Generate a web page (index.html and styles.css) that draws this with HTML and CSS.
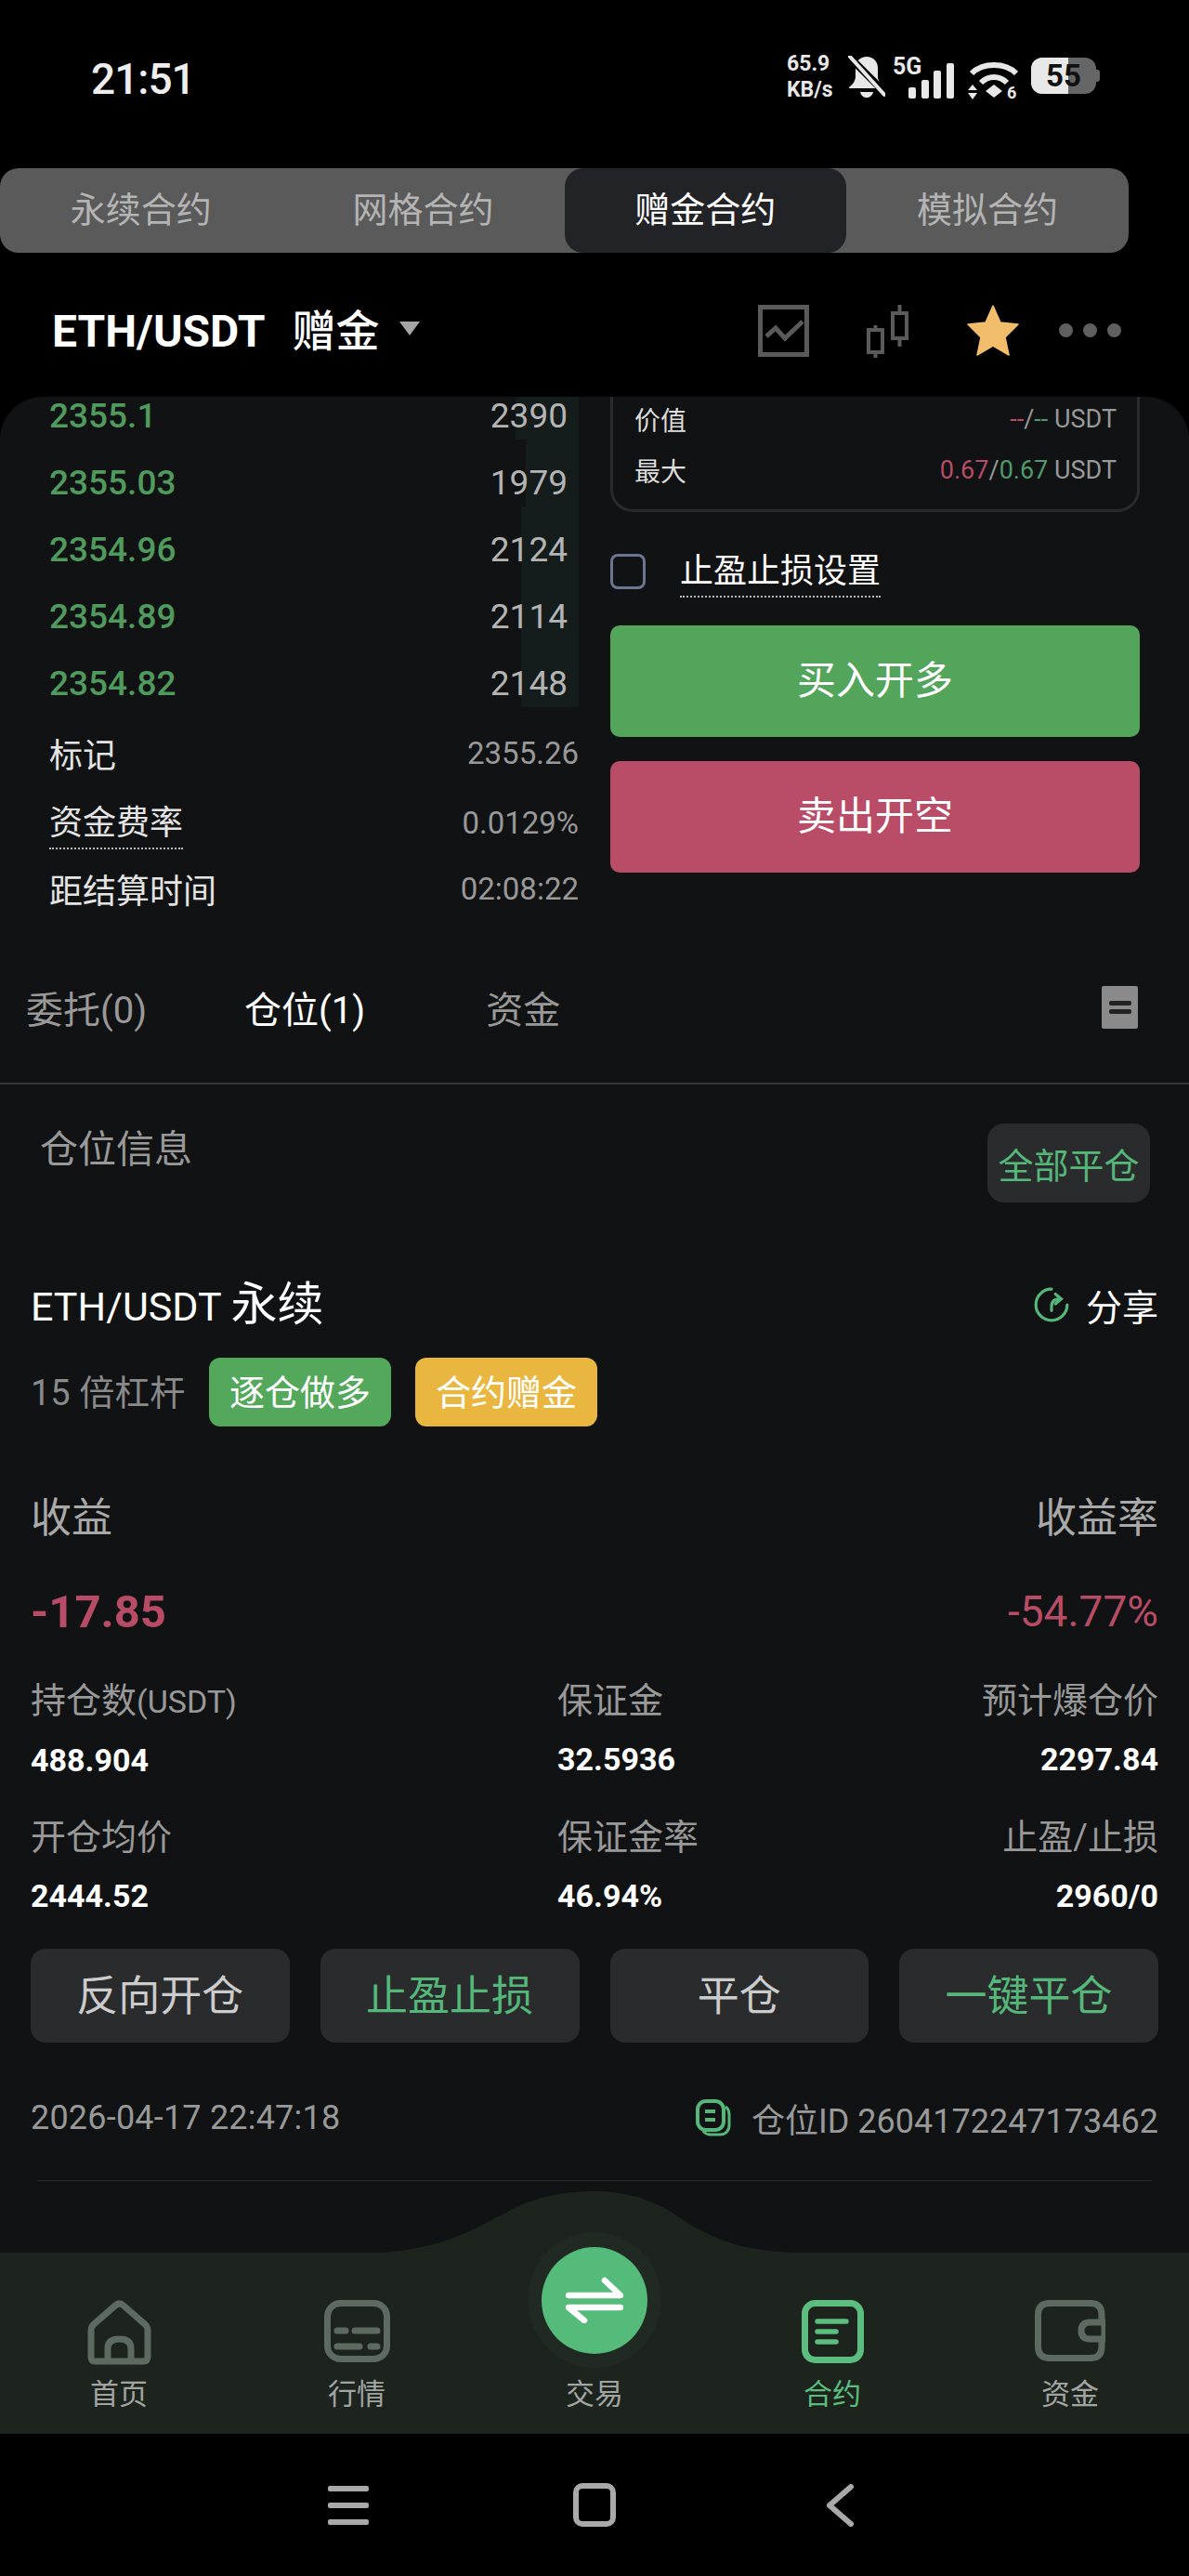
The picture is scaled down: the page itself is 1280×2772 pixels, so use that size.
FILE: index.html
```html
<!DOCTYPE html>
<html lang="zh-CN">
<head>
    <meta charset="UTF-8">
    <meta name="viewport" content="width=device-width, initial-scale=1.0">
    <title>赠金合约</title>
    <link rel="stylesheet" href="styles.css">
</head>
<body>
<div class="page">

    <div class="status">
        <div class="clock">21:51</div>
        <div class="status-icons">
            <div class="speed"><span>65.9</span><span>KB/s</span></div>
            <svg class="bell" width="40" height="45" viewBox="0 0 40 45">
                <path d="M20 1c7 0 12 5 12 12v9c0 5 3 9 7 12v1H1v-1c4-3 7-7 7-12V13C8 6 13 1 20 1z" fill="#e8e8e8"/>
                <path d="M13 39h14c-1 4-4 6-7 6s-6-2-7-6z" fill="#e8e8e8"/>
                <path d="M0 0L40 40" stroke="#000" stroke-width="8"/>
                <path d="M2 1L39 42" stroke="#e8e8e8" stroke-width="4" stroke-linecap="round"/>
            </svg>
            <div class="net">
                <span class="five-g">5G</span>
                <div class="bars">
                    <i class="b1"></i><i class="b2"></i><i class="b3"></i><i class="b4"></i>
                </div>
            </div>
            <svg class="wifi" width="56" height="46" viewBox="0 0 56 46">
                <path d="M4 14C16 2 40 2 52 14" fill="none" stroke="#e8e8e8" stroke-width="6"/>
                <path d="M14 24C22 16 34 16 42 24" fill="none" stroke="#e8e8e8" stroke-width="6"/>
                <path d="M28 26l9 7-9 7-9-7z" fill="#e8e8e8"/>
                <path d="M5 26l5 6H0zM5 42l5-7H0z" fill="#e8e8e8"/>
                <text x="42" y="41" class="wifi-six">6</text>
            </svg>
            <div class="battery">
                <div class="battery-fill"></div>
                <span>55</span>
                <i class="battery-cap"></i>
            </div>
        </div>
    </div>

    <div class="mode-tabs">
        <div class="mode-tab">永续合约</div>
        <div class="mode-tab">网格合约</div>
        <div class="mode-tab active">赠金合约</div>
        <div class="mode-tab">模拟合约</div>
    </div>

    <div class="pair-head">
        <div class="pair-name">ETH/USDT</div>
        <div class="pair-kind">赠金</div>
        <div class="caret"></div>
        <div class="pair-tools">
            <svg class="tool-chart" width="55" height="56" viewBox="0 0 55 56">
                <rect x="2.5" y="2.5" width="50" height="51" fill="none" stroke="#5a5a5a" stroke-width="5"/>
                <path d="M9 34l10-9 10 11 19-18" fill="none" stroke="#5a5a5a" stroke-width="5"/>
            </svg>
            <svg class="tool-candle" width="46" height="57" viewBox="0 0 46 57">
                <rect x="2" y="27" width="15" height="24" fill="none" stroke="#5a5a5a" stroke-width="4"/>
                <path d="M9.5 22v5M9.5 51v6" stroke="#5a5a5a" stroke-width="4"/>
                <rect x="28" y="9" width="15" height="27" fill="none" stroke="#5a5a5a" stroke-width="4"/>
                <path d="M35.500 0v9M35.500 36v9" stroke="#5a5a5a" stroke-width="4"/>
            </svg>
            <svg class="tool-star" width="56" height="56" viewBox="0 0 56 56">
                <path d="M28 1l8 18 19 2-14 14 4 19-17-10-17 10 4-19L1 21l19-2z" fill="#f2bd6b" stroke="#f2bd6b" stroke-width="1.500" stroke-linejoin="round"/>
            </svg>
            <div class="tool-dots"><i></i><i></i><i></i></div>
        </div>
    </div>

    <div class="panel">
        <div class="trade">
            <div class="trade-left">
                <div class="book">
                    <div class="book-row"><i class="depth d1"></i><span class="price">2355.1</span><span class="size">2390</span></div>
                    <div class="book-row"><i class="depth d2"></i><span class="price">2355.03</span><span class="size">1979</span></div>
                    <div class="book-row"><i class="depth d3"></i><span class="price">2354.96</span><span class="size">2124</span></div>
                    <div class="book-row"><i class="depth d3"></i><span class="price">2354.89</span><span class="size">2114</span></div>
                    <div class="book-row"><i class="depth d3"></i><span class="price">2354.82</span><span class="size">2148</span></div>
                </div>
                <div class="stat"><span>标记</span><span class="stat-val">2355.26</span></div>
                <div class="stat stat-funding"><span class="dotted">资金费率</span><span class="stat-val">0.0129%</span></div>
                <div class="stat stat-settle"><span>距结算时间</span><span class="stat-val">02:08:22</span></div>
            </div>
            <div class="trade-right">
                <div class="order-box">
                    <div class="order-row"><span>价值</span><span class="order-val"><em class="red">--</em>/<em class="green">--</em> USDT</span></div>
                    <div class="order-row"><span>最大</span><span class="order-val"><em class="red">0.67</em>/<em class="green">0.67</em> USDT</span></div>
                </div>
                <div class="tp-row">
                    <div class="checkbox"></div>
                    <span class="dotted">止盈止损设置</span>
                </div>
                <div class="big-btn buy">买入开多</div>
                <div class="big-btn sell">卖出开空</div>
            </div>
        </div>

        <div class="sub-tabs">
            <span class="sub-tab">委托(0)</span>
            <span class="sub-tab on">仓位(1)</span>
            <span class="sub-tab">资金</span>
            <div class="doc-btn"><i></i><i></i></div>
        </div>

        <div class="pos">
            <div class="pos-head">
                <span class="pos-title">仓位信息</span>
                <div class="close-all">全部平仓</div>
            </div>

            <div class="pos-name">
                <span class="pos-pair">ETH/USDT <span class="pos-kind">永续</span></span>
                <span class="share">
                    <svg width="40" height="40" viewBox="0 0 38 38">
                        <path d="M19 3A16 16 0 1 0 35 19" fill="none" stroke="#55b87a" stroke-width="3" stroke-linecap="round"/>
                        <path d="M19 25v-4c0-5 3-8 9-8" fill="none" stroke="#55b87a" stroke-width="3" stroke-linecap="round"/>
                        <path d="M23 8l6 5-6 5" fill="none" stroke="#55b87a" stroke-width="3" stroke-linecap="round"/>
                    </svg>
                    分享
                </span>
            </div>

            <div class="pos-meta">
                <span class="leverage">15 倍杠杆</span>
                <span class="badge badge-green">逐仓做多</span>
                <span class="badge badge-yellow">合约赠金</span>
            </div>

            <div class="pnl-labels"><span>收益</span><span>收益率</span></div>
            <div class="pnl-values"><span class="pnl-num">-17.85</span><span class="pnl-rate">-54.77%</span></div>

            <div class="figures">
                <div class="fig"><div class="fig-label">持仓数<small>(USDT)</small></div><div class="fig-val">488.904</div></div>
                <div class="fig"><div class="fig-label">保证金</div><div class="fig-val">32.5936</div></div>
                <div class="fig fig-end"><div class="fig-label">预计爆仓价</div><div class="fig-val">2297.84</div></div>
                <div class="fig"><div class="fig-label">开仓均价</div><div class="fig-val">2444.52</div></div>
                <div class="fig"><div class="fig-label">保证金率</div><div class="fig-val">46.94%</div></div>
                <div class="fig fig-end"><div class="fig-label">止盈/止损</div><div class="fig-val">2960/0</div></div>
            </div>

            <div class="actions">
                <div class="action">反向开仓</div>
                <div class="action action-green">止盈止损</div>
                <div class="action">平仓</div>
                <div class="action action-green">一键平仓</div>
            </div>

            <div class="pos-foot">
                <span>2026-04-17 22:47:18</span>
                <span class="pos-id">
                    <svg width="38" height="40" viewBox="0 0 38 40">
                        <rect x="2" y="2" width="28" height="31" rx="9" fill="none" stroke="#55b87a" stroke-width="4"/>
                        <path d="M32 8c3 2 4 5 4 9v11c0 6-4 10-10 10H16c-4 0-6-1-8-4" fill="none" stroke="#55b87a" stroke-width="3"/>
                        <path d="M10 13h11M10 22h11" stroke="#55b87a" stroke-width="4"/>
                    </svg>
                    <span>仓位ID 2604172247173462</span>
                </span>
            </div>
            <div class="pos-rule"></div>
        </div>
    </div>

    <div class="nav">
        <svg class="nav-hump" width="1280" height="67" viewBox="0 0 1280 67">
            <path d="M385 67C480 67 520 34 560 15C590 3 615 0 640 0C665 0 695 5 722 22C770 55 800 67 890 67Z" fill="#1d241e"/>
        </svg>
        <div class="nav-item">
            <svg width="69" height="70" viewBox="0 0 69 70">
                <path d="M4 61V33Q4 29 7 26L30 6Q34.500 2 39 6L62 26Q65 29 65 33V61Q65 66 60 66H9Q4 66 4 61Z" fill="none" stroke="#5c6a5f" stroke-width="7"/>
                <path d="M22 66V52Q22 42 34.500 42Q47 42 47 52V66" fill="none" stroke="#5c6a5f" stroke-width="7"/>
            </svg>
            <span>首页</span>
        </div>
        <div class="nav-item">
            <svg width="71" height="70" viewBox="0 0 71 70">
                <rect x="3.500" y="3.500" width="64" height="60" rx="14" fill="none" stroke="#5c6a5f" stroke-width="7"/>
                <path d="M14 33h9M33 33h24M14 50h24M50 50h7" stroke="#5c6a5f" stroke-width="7" stroke-linecap="round"/>
            </svg>
            <span>行情</span>
        </div>
        <div class="nav-item nav-trade">
            <div class="trade-slot">
                <div class="trade-halo">
                    <div class="trade-circle">
                        <svg width="62" height="50" viewBox="0 0 62 50">
                            <path d="M3 20H59L42 4" fill="none" stroke="#fff" stroke-width="6.500" stroke-linecap="round" stroke-linejoin="round"/>
                            <path d="M59 33H3L20 47" fill="none" stroke="#fff" stroke-width="6.500" stroke-linecap="round" stroke-linejoin="round"/>
                        </svg>
                    </div>
                </div>
            </div>
            <span>交易</span>
        </div>
        <div class="nav-item nav-on">
            <svg width="67" height="70" viewBox="0 0 67 70">
                <rect x="3.500" y="3.500" width="60" height="61" rx="11" fill="none" stroke="#5bbd7e" stroke-width="7"/>
                <path d="M17 23H48M17 34H37M17 45H37" stroke="#5bbd7e" stroke-width="5.500" stroke-linecap="round"/>
            </svg>
            <span>合约</span>
        </div>
        <div class="nav-item">
            <svg width="76" height="70" viewBox="0 0 76 70">
                <path d="M72 24V16Q72 3.500 60 3.500H16Q3.500 3.500 3.500 16V50Q3.500 62.500 16 62.500H60Q72 62.500 72 50V42" fill="none" stroke="#5c6a5f" stroke-width="7"/>
                <path d="M75 24H60Q50 24 50 33Q50 42 60 42H75Z" fill="none" stroke="#5c6a5f" stroke-width="7"/>
            </svg>
            <span>资金</span>
        </div>
    </div>

    <div class="sys-bar">
        <div class="sys-menu"><i></i><i></i><i></i></div>
        <div class="sys-home"></div>
        <svg width="32" height="46" viewBox="0 0 32 46">
            <path d="M28 3L5 23L28 43" fill="none" stroke="#a9a9a9" stroke-width="6" stroke-linecap="round" stroke-linejoin="round"/>
        </svg>
    </div>

</div>
</body>
</html>
```

FILE: styles.css
```css
* {
    box-sizing: border-box;
}
body {
    margin: 0;
    background: #000;
    font-family: Roboto, "Noto Sans CJK SC", sans-serif;
    color: #fff;
}
em, small {
    font-style: normal;
}
.page {
    width: 1280px;
    height: 2772px;
    display: flex;
    flex-direction: column;
    overflow: hidden;
}

/* status bar */
.status {
    height: 181px;
    flex: none;
    display: flex;
    justify-content: space-between;
    align-items: flex-start;
    padding: 58px 100px 0 98px;
}
.clock {
    font-size: 46px;
    line-height: 54px;
    font-weight: 500;
    letter-spacing: -1px;
    color: #eee;
}
.status-icons {
    display: flex;
    align-items: flex-start;
    padding-top: 2px;
    color: #e8e8e8;
}
.speed {
    width: 66px;
    margin-top: -5px;
    display: flex;
    flex-direction: column;
    font-size: 23px;
    line-height: 28px;
    font-weight: 700;
}
.net {
    position: relative;
    width: 70px;
    height: 46px;
    margin-left: 8px;
    line-height: 24px;
}
.five-g {
    font-size: 25px;
    font-weight: 700;
}
.bars {
    position: absolute;
    left: 17px;
    right: 4px;
    bottom: 0;
    display: flex;
    align-items: flex-end;
    justify-content: space-between;
}
.bars i {
    width: 8px;
    background: #e8e8e8;
    border-radius: 2px;
}
.b1 { height: 12px; }
.b2 { height: 20px; }
.b3 { height: 30px; }
.b4 { height: 38px; }
.wifi {
    margin-left: 11px;
    margin-top: 5px;
}
.wifi-six {
    font-size: 18px;
    font-weight: 700;
    fill: #e8e8e8;
}
.battery {
    position: relative;
    width: 70px;
    height: 39px;
    margin-left: 12px;
    margin-top: 2px;
    background: #666;
    border-radius: 12px;
    color: #111;
    text-align: center;
}
.battery-fill {
    position: absolute;
    left: 0;
    top: 0;
    bottom: 0;
    width: 40px;
    background: #e8e8e8;
    border-radius: 12px 0 0 12px;
}
.battery span {
    position: relative;
    font-size: 33px;
    line-height: 39px;
    font-weight: 700;
}
.battery-cap {
    position: absolute;
    right: -4px;
    top: 13px;
    width: 4px;
    height: 13px;
    background: #666;
    border-radius: 0 3px 3px 0;
}

/* contract type tabs */
.mode-tabs {
    width: 1215px;
    height: 91px;
    flex: none;
    display: flex;
    background: #5a5a5a;
    border-radius: 20px;
}
.mode-tab {
    width: 25%;
    display: flex;
    align-items: center;
    justify-content: center;
    padding-bottom: 8px;
    font-size: 38px;
    color: #b4b4b4;
    border-radius: 20px;
}
.mode-tab.active {
    background: #222327;
    color: #fff;
}

/* pair header */
.pair-head {
    height: 155px;
    flex: none;
    display: flex;
    align-items: center;
    padding: 14px 0 0 56px;
}
.pair-name {
    font-size: 48px;
    font-weight: 700;
    line-height: 60px;
}
.pair-kind {
    font-size: 47px;
    line-height: 60px;
    font-weight: 500;
    margin-left: 29px;
}
.caret {
    width: 0;
    height: 0;
    margin: -6px 0 0 21px;
    border-left: 11px solid transparent;
    border-right: 11px solid transparent;
    border-top: 15px solid #a5a5a5;
}
.pair-tools {
    display: flex;
    align-items: flex-start;
    margin-left: auto;
    padding-right: 73px;
}
.tool-candle {
    margin-left: 62px;
}
.tool-star {
    margin-left: 62px;
}
.tool-dots {
    display: flex;
    gap: 11px;
    margin: 20px 0 0 43px;
}
.tool-dots i {
    width: 15px;
    height: 15px;
    border-radius: 50%;
    background: #5f5f5f;
}

/* main panel */
.panel {
    flex: 1;
    min-height: 0;
    background: #111213;
    border-radius: 46px 46px 0 0;
    overflow: hidden;
}
.trade {
    display: flex;
    margin-top: -16px;
}
.trade-left {
    width: 570px;
    margin-left: 53px;
}
.trade-right {
    width: 570px;
    margin-left: 34px;
}
.book-row {
    position: relative;
    height: 72px;
    display: flex;
    justify-content: space-between;
    align-items: center;
    padding-right: 12px;
    font-size: 37px;
}
.depth {
    position: absolute;
    right: 0;
    top: -10px;
    bottom: 10px;
    background: #141c1c;
}
.d1 { width: 68px; }
.d2 { width: 57px; }
.d3 { width: 62px; }
.price {
    position: relative;
    font-weight: 500;
    color: #4f9a5c;
}
.size {
    position: relative;
    color: #b4b4b4;
}
.stat {
    height: 72px;
    display: flex;
    justify-content: space-between;
    align-items: center;
    font-size: 36px;
    color: #e4e4e4;
}
.book + .stat {
    margin-top: 3px;
}
.stat-funding {
    margin-top: 3px;
}
.stat-settle {
    margin-top: -1px;
}
.stat-val {
    font-size: 33px;
    color: #999;
}
.dotted {
    padding-bottom: 4px;
    border-bottom: 2px dotted #bbb;
}
.order-box {
    height: 140px;
    padding: 9px 22px 0 23px;
    border: 3px solid #2a2b2d;
    border-radius: 0 0 24px 24px;
}
.order-row {
    height: 55px;
    display: flex;
    justify-content: space-between;
    align-items: center;
    font-size: 28px;
    color: #ddd;
}
.order-val {
    font-size: 27px;
    color: #999;
}
.red {
    color: #b84c66;
}
.green {
    color: #4f9a6c;
}
.tp-row {
    display: flex;
    align-items: center;
    gap: 37px;
    margin-top: 45px;
    height: 38px;
    font-size: 36px;
    line-height: 44px;
}
.tp-row .dotted {
    margin-top: 6px;
}
.checkbox {
    width: 38px;
    height: 38px;
    border: 3px solid #6d7590;
    border-radius: 8px;
}
.big-btn {
    height: 120px;
    display: flex;
    align-items: center;
    justify-content: center;
    padding-bottom: 9px;
    font-size: 42px;
    border-radius: 10px;
}
.buy {
    margin-top: 39px;
    background: #52a55b;
}
.sell {
    margin-top: 26px;
    background: #b94c66;
}

/* position tabs */
.sub-tabs {
    height: 175px;
    display: flex;
    align-items: center;
    padding: 11px 55px 0 28px;
    border-bottom: 2px solid #37383a;
    font-size: 40px;
}
.sub-tab {
    color: #999;
    margin-right: 105px;
}
.sub-tab.on {
    color: #fff;
    margin-right: 130px;
}
.doc-btn {
    width: 39px;
    height: 46px;
    margin-left: auto;
    background: #8a8a8a;
    border-radius: 2px;
    display: flex;
    flex-direction: column;
    justify-content: center;
    align-items: center;
    gap: 4px;
}
.doc-btn i {
    width: 24px;
    height: 5px;
    border-radius: 2px;
    background: #222;
}

/* position card */
.pos {
    padding: 0 33px;
}
.pos-head {
    display: flex;
    justify-content: space-between;
    padding-top: 42px;
}
.pos-title {
    margin-left: 10px;
    font-size: 41px;
    line-height: 56px;
    color: #999;
}
.close-all {
    width: 175px;
    height: 85px;
    margin-right: 9px;
    display: flex;
    align-items: center;
    justify-content: center;
    background: #2a2b2d;
    border-radius: 18px;
    font-size: 38px;
    color: #55b87a;
    white-space: nowrap;
}
.pos-name {
    height: 60px;
    margin-top: 81px;
    display: flex;
    justify-content: space-between;
    align-items: center;
}
.pos-pair {
    font-size: 43px;
    line-height: 60px;
}
.pos-kind {
    font-size: 50px;
}
.share {
    display: flex;
    align-items: center;
    gap: 17px;
    padding-bottom: 2px;
    font-size: 39px;
}
.pos-meta {
    display: flex;
    align-items: center;
    margin-top: 26px;
    height: 74px;
}
.leverage {
    width: 192px;
    padding-bottom: 5px;
    font-size: 38px;
    color: #8a8a8a;
}
.badge {
    width: 196px;
    height: 74px;
    display: flex;
    align-items: center;
    justify-content: center;
    padding-bottom: 5px;
    font-size: 38px;
    border-radius: 12px;
}
.badge-green {
    background: #53a85b;
}
.badge-yellow {
    margin-left: 26px;
    background: #e9b73f;
}
.pnl-labels,
.pnl-values {
    display: flex;
    justify-content: space-between;
    height: 60px;
    align-items: center;
}
.pnl-labels {
    margin-top: 68px;
    padding-bottom: 6px;
    font-size: 44px;
    color: #aaa;
}
.pnl-values {
    margin-top: 41px;
    color: #b84c66;
}
.pnl-num {
    font-size: 49px;
    font-weight: 700;
}
.pnl-rate {
    font-size: 46px;
}
.figures {
    display: grid;
    grid-template-columns: 567px 1fr 1fr;
    row-gap: 33px;
    margin-top: 41px;
}
.fig-end {
    text-align: right;
}
.fig-label {
    font-size: 38px;
    line-height: 50px;
    color: #999;
}
.fig-label small {
    font-size: 34px;
}
.fig-val {
    margin-top: 13px;
    font-size: 34px;
    line-height: 50px;
    font-weight: 700;
}
.actions {
    display: grid;
    grid-template-columns: repeat(4, 1fr);
    gap: 33px;
    margin-top: 32px;
}
.action {
    height: 101px;
    display: flex;
    align-items: center;
    justify-content: center;
    padding-bottom: 7px;
    background: #2a2b2d;
    border-radius: 16px;
    font-size: 45px;
    color: #ccc;
}
.action-green {
    color: #55b87a;
}
.pos-foot {
    display: flex;
    justify-content: space-between;
    align-items: center;
    height: 50px;
    margin-top: 56px;
    font-size: 36px;
    letter-spacing: 0.2px;
    color: #999;
}
.pos-id {
    display: flex;
    align-items: center;
    gap: 22px;
    letter-spacing: 0;
}
.pos-rule {
    margin: 42px 7px 0;
    border-top: 1px solid #2a2b2d;
}

/* bottom nav */
.nav {
    position: relative;
    height: 195px;
    flex: none;
    display: flex;
    background: #1d241e;
}
.nav-hump {
    position: absolute;
    left: 0;
    top: -66px;
}
.nav-item {
    position: relative;
    width: 256px;
    display: flex;
    flex-direction: column;
    align-items: center;
    padding-top: 51px;
    font-size: 31px;
    color: #a2a5a2;
}
.nav-item span {
    line-height: 40px;
    margin-top: 12px;
}
.nav-on span {
    color: #5bbd7e;
}
.trade-slot {
    position: relative;
    width: 70px;
    height: 70px;
}
.trade-halo {
    position: absolute;
    left: -37px;
    top: -73px;
    width: 144px;
    height: 146px;
    display: flex;
    align-items: center;
    justify-content: center;
    background: #202a22;
    border-radius: 50%;
}
.trade-circle {
    width: 114px;
    height: 115px;
    display: flex;
    align-items: center;
    justify-content: center;
    background: #54bb7a;
    border-radius: 50%;
}

/* system bar */
.sys-bar {
    height: 153px;
    flex: none;
    display: flex;
    align-items: center;
    justify-content: space-between;
    padding: 0 360px 0 353px;
    background: #000;
}
.sys-menu {
    width: 44px;
    display: flex;
    flex-direction: column;
    gap: 12px;
}
.sys-menu i {
    height: 6px;
    border-radius: 2px;
    background: #a9a9a9;
}
.sys-home {
    width: 46px;
    height: 47px;
    margin-right: 6px;
    border: 6px solid #a9a9a9;
    border-radius: 10px;
}
```
